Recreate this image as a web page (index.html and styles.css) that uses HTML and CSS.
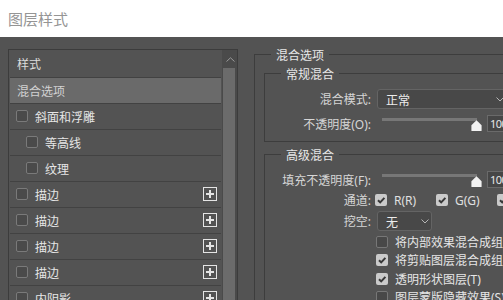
FILE: index.html
```html
<!DOCTYPE html>
<html lang="zh-CN">
<head>
<meta charset="utf-8">
<title>图层样式</title>
<link rel="stylesheet" href="styles.css">
</head>
<body>
<div class="titlebar">图层样式</div>
<div class="main">
  <div class="panel">
    <div class="list">
      <div class="row head">样式</div>
      <div class="row sel">混合选项</div>
      <div class="row"><span class="cb"></span><span class="txt">斜面和浮雕</span></div>
      <div class="row sub"><span class="cb"></span><span class="txt">等高线</span></div>
      <div class="row sub"><span class="cb"></span><span class="txt">纹理</span></div>
      <div class="row"><span class="cb"></span><span class="txt">描边</span><svg class="plus" width="14" height="14" viewBox="0 0 14 14"><rect x="0.5" y="0.5" width="13" height="13" fill="none" stroke="#e4e4e4"/><path d="M3 7h8M7 3v8" stroke="#e4e4e4" stroke-width="2"/></svg></div>
      <div class="row"><span class="cb"></span><span class="txt">描边</span><svg class="plus" width="14" height="14" viewBox="0 0 14 14"><rect x="0.5" y="0.5" width="13" height="13" fill="none" stroke="#e4e4e4"/><path d="M3 7h8M7 3v8" stroke="#e4e4e4" stroke-width="2"/></svg></div>
      <div class="row"><span class="cb"></span><span class="txt">描边</span><svg class="plus" width="14" height="14" viewBox="0 0 14 14"><rect x="0.5" y="0.5" width="13" height="13" fill="none" stroke="#e4e4e4"/><path d="M3 7h8M7 3v8" stroke="#e4e4e4" stroke-width="2"/></svg></div>
      <div class="row"><span class="cb"></span><span class="txt">描边</span><svg class="plus" width="14" height="14" viewBox="0 0 14 14"><rect x="0.5" y="0.5" width="13" height="13" fill="none" stroke="#e4e4e4"/><path d="M3 7h8M7 3v8" stroke="#e4e4e4" stroke-width="2"/></svg></div>
      <div class="row"><span class="cb"></span><span class="txt">内阴影</span><svg class="plus" width="14" height="14" viewBox="0 0 14 14"><rect x="0.5" y="0.5" width="13" height="13" fill="none" stroke="#e4e4e4"/><path d="M3 7h8M7 3v8" stroke="#e4e4e4" stroke-width="2"/></svg></div>
    </div>
    <div class="scroll">
      <div class="arrow"><svg width="9" height="5" viewBox="0 0 9 5"><path d="M0.5 4.5L4.5 0.8L8.5 4.5" fill="none" stroke="#9a9a9a"/></svg></div>
      <div class="thumb"></div>
    </div>
  </div>
  <div class="right">
    <fieldset class="outer">
      <legend class="lg-outer">混合选项</legend>
      <fieldset class="inner normal">
        <legend class="lg-inner">常规混合</legend>
        <div class="frow r-mode">
          <span class="lab">混合模式:</span>
          <div class="select wide"><span>正常</span><svg class="chev" width="8" height="5" viewBox="0 0 8 5"><path d="M0.5 0.5L4 4L7.5 0.5" fill="none" stroke="#b5b5b5"/></svg></div>
        </div>
        <div class="frow r-op">
          <span class="lab">不透明度(O):</span>
          <div class="slider"><div class="track"></div><svg class="knob" width="11" height="11" viewBox="0 0 11 11"><path d="M5.5 0.3L10.6 5.2V10.4Q10.6 11 10 11H1Q0.4 11 0.4 10.4V5.2Z" fill="#f2f2f2"/></svg></div>
          <div class="num">100</div>
        </div>
      </fieldset>
      <fieldset class="inner adv">
        <legend class="lg-inner">高级混合</legend>
        <div class="frow r-fill">
          <span class="lab">填充不透明度(F):</span>
          <div class="slider"><div class="track"></div><svg class="knob" width="11" height="11" viewBox="0 0 11 11"><path d="M5.5 0.3L10.6 5.2V10.4Q10.6 11 10 11H1Q0.4 11 0.4 10.4V5.2Z" fill="#f2f2f2"/></svg></div>
          <div class="num">100</div>
        </div>
        <div class="frow r-chan">
          <span class="lab">通道:</span>
          <div class="ch"><span class="cbx on"><svg width="12" height="12" viewBox="0 0 12 12"><path d="M3 6.2L5.2 8.4L9.4 3.8" fill="none" stroke="#383838" stroke-width="2"/></svg></span><span>R(R)</span></div>
          <div class="ch"><span class="cbx on"><svg width="12" height="12" viewBox="0 0 12 12"><path d="M3 6.2L5.2 8.4L9.4 3.8" fill="none" stroke="#383838" stroke-width="2"/></svg></span><span>G(G)</span></div>
          <div class="ch"><span class="cbx on"><svg width="12" height="12" viewBox="0 0 12 12"><path d="M3 6.2L5.2 8.4L9.4 3.8" fill="none" stroke="#383838" stroke-width="2"/></svg></span><span>B(B)</span></div>
        </div>
        <div class="frow r-knock">
          <span class="lab">挖空:</span>
          <div class="select small"><span>无</span><svg class="chev" width="8" height="5" viewBox="0 0 8 5"><path d="M0.5 0.5L4 4L7.5 0.5" fill="none" stroke="#b5b5b5"/></svg></div>
        </div>
        <div class="frow opt o1"><span class="cbx"></span><span>将内部效果混合成组</span></div>
        <div class="frow opt o2"><span class="cbx on"><svg width="12" height="12" viewBox="0 0 12 12"><path d="M3 6.2L5.2 8.4L9.4 3.8" fill="none" stroke="#383838" stroke-width="2"/></svg></span><span>将剪贴图层混合成组</span></div>
        <div class="frow opt o3"><span class="cbx on"><svg width="12" height="12" viewBox="0 0 12 12"><path d="M3 6.2L5.2 8.4L9.4 3.8" fill="none" stroke="#383838" stroke-width="2"/></svg></span><span>透明形状图层(T)</span></div>
        <div class="frow opt o4"><span class="cbx"></span><span>图层蒙版隐藏效果(S)</span></div>
      </fieldset>
    </fieldset>
  </div>
</div>
</body>
</html>
```

FILE: styles.css
```css
* { box-sizing: border-box; }
html, body {
  margin: 0;
  width: 503px;
  height: 300px;
  overflow: hidden;
}
body {
  background: #535353;
  font-family: "Noto Sans", "Noto Sans CJK SC", sans-serif;
  font-size: 12px;
  color: #e2e2e2;
}
.titlebar {
  height: 37px;
  background: #ffffff;
  color: #959595;
  font-family: "Noto Sans CJK SC", sans-serif;
  font-size: 15px;
  line-height: 37px;
  padding-left: 8px;
}
.main {
  display: flex;
  align-items: flex-start;
  padding-left: 8px;
}
.panel {
  flex: none;
  margin-top: 12px;
  width: 230px;
  height: 260px;
  border: 1px solid #3c3c3c;
  display: flex;
}
.list {
  width: 211px;
  margin: 1px 0 0 1px;
}
.row {
  height: 26px;
  border-bottom: 1px solid #424242;
  display: flex;
  align-items: center;
  padding-left: 6px;
  padding-right: 4px;
  white-space: nowrap;
  color: #e6e6e6;
}
.row.head {
  height: 27px;
  padding-left: 7px;
  color: #dcdcdc;
}
.row.sel {
  background: #6a6a6a;
  padding-left: 7px;
  color: #d2d2d2;
}
.row.sub {
  padding-left: 16px;
}
.cb {
  flex: none;
  width: 12px;
  height: 12px;
  margin-top: -2px;
  border: 1px solid #7a7a7a;
  border-radius: 2px;
  background: #4a4a4a;
  margin-right: 7px;
}
.plus {
  flex: none;
  margin-left: auto;
  margin-top: -1px;
}
.scroll {
  flex: none;
  width: 15px;
  margin-left: 1px;
  background: #4a4a4a;
  display: flex;
  flex-direction: column;
}
.arrow {
  height: 18px;
  display: flex;
  align-items: center;
  justify-content: center;
  padding-left: 1px;
}
.thumb {
  margin-left: 1px;
  width: 12px;
  flex: 1;
  background: #6b6b6b;
}
.right {
  flex: none;
  width: 320px;
  margin-left: 16px;
  margin-top: 9px;
}
fieldset {
  margin: 0;
  min-width: 0;
}
legend {
  line-height: 17px;
  padding: 0 5px;
  font-family: "Noto Sans CJK SC", sans-serif;
  color: #e8e8e8;
}
.outer {
  border: none;
  border-top: 1px solid #3d3d3d;
  border-left: 1px solid #3d3d3d;
  padding: 2px 0 0 9px;
}
.lg-outer { margin-left: 7px; }
.lg-inner { margin-left: 16px; }
.inner {
  border: 1px solid #3d3d3d;
  border-right: none;
  padding: 0;
}
.inner.normal { padding-bottom: 9px; }
.inner.adv { margin-top: 4px; border-bottom: none; }
.frow {
  display: flex;
  align-items: center;
  height: 18px;
  white-space: nowrap;
}
.lab {
  flex: none;
  width: 106px;
  margin-right: 6px;
  text-align: right;
  color: #d6d6d6;
}
.r-mode { margin-top: 7px; height: 20px; }
.r-op { margin-top: 6px; height: 17px; }
.r-fill { margin-top: 8px; height: 17px; }
.r-chan { margin-top: 3px; }
.r-knock { margin-top: 2px; height: 20px; }
.o1 { margin-top: 2px; }
.o3 { margin-top: 1px; }
.select {
  flex: none;
  height: 20px;
  border: 1px solid #646464;
  border-radius: 3px;
  background: #484848;
  padding-left: 8px;
  display: flex;
  align-items: center;
  color: #ececec;
  font-family: "Noto Sans CJK SC", sans-serif;
}
.select .chev { margin-left: auto; }
.select.wide { width: 136px; }
.select.wide .chev { margin-right: 8px; }
.select.small { width: 55px; }
.select.small .chev { margin-right: 2px; }
.slider {
  flex: none;
  position: relative;
  width: 105px;
  height: 17px;
  align-self: flex-start;
}
.track {
  margin: 3px 0 0 5px;
  width: 95px;
  height: 3px;
  background: #777777;
}
.knob {
  position: absolute;
  left: 94px;
  top: 5px;
}
.num {
  flex: none;
  margin-left: 5px;
  width: 40px;
  height: 17px;
  border: 1px solid #6a6a6a;
  background: #464646;
  padding-left: 2px;
  font-size: 11px;
  letter-spacing: -0.6px;
  line-height: 15px;
  color: #e6e6e6;
}
.ch {
  flex: none;
  width: 61px;
  display: flex;
  align-items: center;
  color: #e0e0e0;
}
.r-chan .ch:first-of-type { margin-left: -2px; }
.cbx {
  flex: none;
  width: 12px;
  height: 12px;
  border: 1px solid #777777;
  border-radius: 2px;
  background: #484848;
  margin-right: 7px;
  display: flex;
}
.cbx.on {
  border: none;
  background: #cacaca;
}
.opt {
  padding-left: 111px;
  color: #e6e6e6;
}
.opt .cbx { margin-right: 7px; }
```
